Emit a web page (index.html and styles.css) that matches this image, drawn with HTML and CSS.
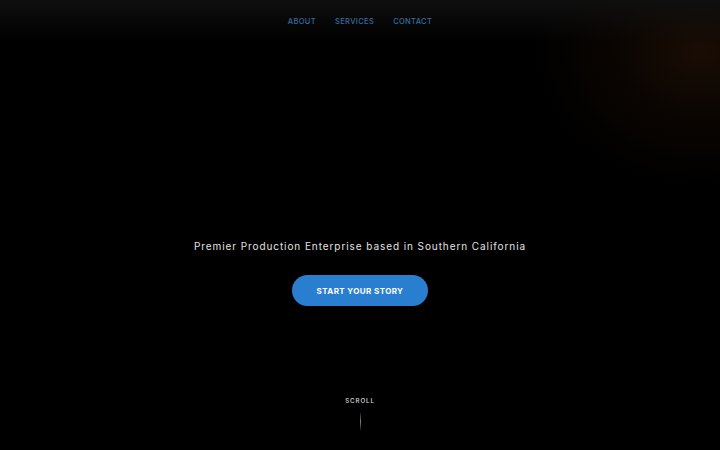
FILE: index.html
```html
<!DOCTYPE html>
<html lang="en">
<head>
<meta charset="utf-8">
<title>Premier Production</title>
<link rel="stylesheet" href="styles.css">
</head>
<body>
<div class="page">
  <div class="glow"></div>
  <header class="header">
    <nav class="nav">
      <a href="#" class="nav-link">ABOUT</a>
      <a href="#" class="nav-link">SERVICES</a>
      <a href="#" class="nav-link">CONTACT</a>
    </nav>
  </header>
  <main class="hero">
    <p class="tagline">Premier Production Enterprise based in Southern California</p>
    <a href="#" class="cta">START YOUR STORY</a>
  </main>
  <div class="scroll">
    <span class="scroll-label">SCROLL</span>
    <span class="scroll-line"></span>
  </div>
</div>
</body>
</html>
```

FILE: styles.css
```css
* { box-sizing: border-box; }
html, body { margin: 0; padding: 0; background: #000; }
body { font-family: Inter, "Noto Sans", sans-serif; color: #ddd; }
.page {
  position: relative;
  width: 720px;
  height: 450px;
  overflow: hidden;
  background: #000;
  display: flex;
  flex-direction: column;
  align-items: center;
}
.glow {
  position: absolute;
  right: -150px;
  top: -90px;
  width: 340px;
  height: 280px;
  background: radial-gradient(ellipse at center, rgba(52,25,9,0.5) 0%, rgba(30,14,5,0.32) 35%, rgba(0,0,0,0) 70%);
  pointer-events: none;
}
.header {
  position: relative;
  width: 100%;
  height: 42px;
  background: linear-gradient(to bottom, rgba(16,16,16,0.9), rgba(0,0,0,0));
  display: flex;
  justify-content: center;
  padding-top: 17px;
}
.nav { display: flex; gap: 19px; }
.nav-link {
  color: #3a6b9f;
  text-decoration: none;
  font-size: 7.5px;
  font-weight: 500;
  letter-spacing: 0.35px;
  line-height: 9px;
}
.hero {
  position: relative;
  flex: 1;
  display: flex;
  flex-direction: column;
  align-items: center;
  padding-top: 198px;
}
.tagline {
  margin: 0;
  font-size: 10px;
  letter-spacing: 0.92px;
  line-height: 13px;
  color: #e2e2e2;
  font-weight: 400;
}
.cta {
  margin-top: 22px;
  width: 136px;
  height: 31px;
  border-radius: 16px;
  background: #2a7ed0;
  color: #fff;
  font-size: 8px;
  font-weight: 700;
  letter-spacing: 0.4px;
  text-decoration: none;
  display: flex;
  align-items: center;
  justify-content: center;
}
.scroll {
  position: relative;
  display: flex;
  flex-direction: column;
  align-items: center;
  height: 60px;
  padding-top: 7px;
}
.scroll-label {
  font-size: 6.2px;
  letter-spacing: 0.9px;
  color: #ddd;
  font-weight: 500;
  line-height: 8px;
}
.scroll-line {
  margin-top: 8px;
  width: 1px;
  height: 17px;
  background: linear-gradient(to bottom, rgba(255,255,255,0.1), rgba(255,255,255,0.5), rgba(255,255,255,0.1));
}
```
